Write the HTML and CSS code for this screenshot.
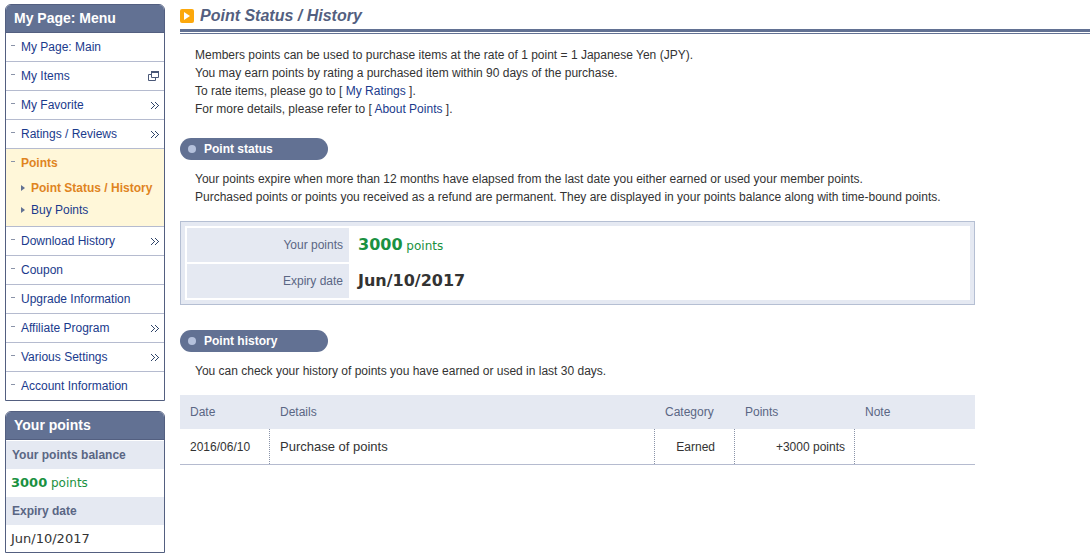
FILE: index.html
```html
<!DOCTYPE html>
<html lang="en">
<head>
    <meta charset="UTF-8">
    <meta name="viewport" content="width=device-width, initial-scale=1.0">
    <title>Point Status / History</title>
    <link rel="stylesheet" href="styles.css">
</head>
<body>

<svg class="sprite" aria-hidden="true">
    <symbol id="more" viewBox="0 0 9 9"><path d="M1 1h1v1h1v1h1v1h1v1h-1v1h-1v1h-1v1h-1v-1h1v-1h1v-1h1v-1h-1v-1h-1v-1h-1zM5 1h1v1h1v1h1v1h1v1h-1v1h-1v1h-1v1h-1v-1h1v-1h1v-1h1v-1h-1v-1h-1v-1h-1z"/></symbol>
    <symbol id="popup" viewBox="0 0 11 10"><path d="M.5 3.500h7v6h-7z" fill="none" stroke="#4a5878"/><path d="M3.500 .5h7v6h-7z" fill="#fff" stroke="#4a5878"/><path d="M3 0h8v2H3z" fill="#4a5878"/></symbol>
    <symbol id="arrow" viewBox="0 0 4 6"><path d="M0 0l4 3-4 3z"/></symbol>
</svg>

<div class="page">
    <aside class="sidebar">
        <nav class="box">
            <h2>My Page: Menu</h2>
            <ul class="menu">
                <li><a href="#">My Page: Main</a></li>
                <li><a href="#">My Items<svg class="popup"><use href="#popup"/></svg></a></li>
                <li><a href="#">My Favorite<svg class="more"><use href="#more"/></svg></a></li>
                <li><a href="#">Ratings / Reviews<svg class="more"><use href="#more"/></svg></a></li>
                <li class="active">
                    <a href="#">Points</a>
                    <ul class="submenu">
                        <li class="current"><a href="#"><svg class="arrow"><use href="#arrow"/></svg>Point Status / History</a></li>
                        <li><a href="#"><svg class="arrow"><use href="#arrow"/></svg>Buy Points</a></li>
                    </ul>
                </li>
                <li><a href="#">Download History<svg class="more"><use href="#more"/></svg></a></li>
                <li><a href="#">Coupon</a></li>
                <li><a href="#">Upgrade Information</a></li>
                <li><a href="#">Affiliate Program<svg class="more"><use href="#more"/></svg></a></li>
                <li><a href="#">Various Settings<svg class="more"><use href="#more"/></svg></a></li>
                <li><a href="#">Account Information</a></li>
            </ul>
        </nav>

        <section class="box">
            <h2>Your points</h2>
            <dl class="balance">
                <dt>Your points balance</dt>
                <dd class="green"><strong>3000</strong> points</dd>
                <dt>Expiry date</dt>
                <dd class="expiry">Jun/10/2017</dd>
            </dl>
        </section>
    </aside>

    <main>
        <h1><svg class="mark" viewBox="0 0 14 14"><rect width="14" height="14" rx="2" fill="#fca80c"/><path d="M4 3l6 4-6 4z" fill="#fff"/></svg>Point Status / History</h1>
        <div class="content">
            <p>Members points can be used to purchase items at the rate of 1 point = 1 Japanese Yen (JPY).<br>
            You may earn points by rating a purchased item within 90 days of the purchase.<br>
            To rate items, please go to [ <a href="#">My Ratings</a> ].<br>
            For more details, please refer to [ <a href="#">About Points</a> ].</p>

            <h3>Point status</h3>
            <p>Your points expire when more than 12 months have elapsed from the last date you either earned or used your member points.<br>
            Purchased points or points you received as a refund are permanent. They are displayed in your points balance along with time-bound points.</p>
            <div class="status">
                <table>
                    <tr><th scope="row">Your points</th><td class="green"><strong>3000</strong> points</td></tr>
                    <tr><th scope="row">Expiry date</th><td><strong>Jun/10/2017</strong></td></tr>
                </table>
            </div>

            <h3>Point history</h3>
            <p>You can check your history of points you have earned or used in last 30 days.</p>
            <table class="history">
                <thead>
                    <tr>
                        <th class="date">Date</th>
                        <th>Details</th>
                        <th class="category">Category</th>
                        <th class="points">Points</th>
                        <th class="note">Note</th>
                    </tr>
                </thead>
                <tbody>
                    <tr>
                        <td>2016/06/10</td>
                        <td class="details">Purchase of points</td>
                        <td class="category">Earned</td>
                        <td class="points">+3000 points</td>
                        <td></td>
                    </tr>
                </tbody>
            </table>
        </div>
    </main>
</div>

</body>
</html>
```
FILE: styles.css
```css
* {box-sizing: border-box; margin: 0; padding: 0;}
body {font-family: "Liberation Sans", Arial, sans-serif; font-size: 12px; line-height: 18px; color: #333; background-color: #fff;}
a {color: #1a3a8c; text-decoration: none;}
a:hover {text-decoration: underline;}
ul {list-style: none;}
table {border-spacing: 0; width: 100%;}
.sprite {display: none;}
.green {color: #1a9141;}

.page {display: flex; gap: 15px; padding: 4px 0 4px 5px;}
.sidebar {flex: 0 0 160px; display: flex; flex-direction: column; gap: 10px;}
main {flex: 1; min-width: 0;}

/* sidebar */
.box {border: 1px solid #535f80; border-radius: 6px 6px 0 0; overflow: hidden;}
.box h2 {background-color: #627193; border-bottom: 1px solid #535f80; color: #fff; font-size: 14px; line-height: 27px; padding-left: 8px;}
.menu > li {border-bottom: 1px solid #b5bbcf;}
.menu > li:last-child {border-bottom: none;}
.menu > li > a {display: flex; align-items: center; height: 28px; padding-right: 5px;}
.menu > li > a::before {content: ""; width: 4px; height: 1px; margin: 0 6px 4px 5px; background-color: #8a93a8;}
.menu svg {flex: none;}
.menu .more, .menu .popup {margin-left: auto;}
.more {width: 9px; height: 9px; fill: #2f4468;}
.popup {width: 11px; height: 10px;}
.menu .active {background-color: #fff7d9; padding-bottom: 5px;}
.menu .active > a, .current a {color: #e0841f; font-weight: bold;}
.submenu a {display: flex; align-items: center; height: 22px; padding-left: 15px; white-space: nowrap;}
.arrow {width: 4px; height: 6px; margin-right: 6px; fill: #627193;}
.balance {padding-top: 1px;}
.balance dt {background-color: #e5e9f2; color: #5a6684; font-weight: bold; line-height: 28px; padding-left: 6px;}
.balance dd {font-family: Verdana, "DejaVu Sans", sans-serif; line-height: 28px; padding-left: 5px;}
.balance strong {font-size: 13px;}
.balance .expiry {font-size: 13px; line-height: 27px;}

/* main column */
h1 {display: flex; align-items: center; gap: 6px; height: 30px; padding-bottom: 5px; border-bottom: 1px solid #627193; color: #535f80; font-size: 16px; font-style: italic; position: relative;}
h1::after {content: ""; position: absolute; left: 0; right: 0; bottom: 1px; height: 3px; background-color: #627193;}
.mark {width: 14px; height: 14px;}
.content {max-width: 795px; padding-top: 12px;}
.content p {padding-left: 15px;}
h3 {display: flex; align-items: center; gap: 8px; width: 148px; height: 22px; margin: 20px 0 10px; padding-left: 8px; border-radius: 11px; background-color: #627193; color: #fff; font-size: 12px;}
h3::before {content: ""; width: 8px; height: 8px; border-radius: 50%; background-color: #b5c1dc;}
.status {margin: 15px 0 25px; padding: 4px; border: 1px solid #b5bfd3; background-color: #e5e9f2;}
.status table {border-spacing: 2px; background-color: #fff;}
.status th {width: 162px; height: 34px; padding-right: 6px; background-color: #e5e9f2; color: #5a6684; font-weight: normal; text-align: right;}
.status td {padding-left: 7px; font-family: Verdana, "DejaVu Sans", sans-serif;}
.status strong {font-size: 16px;}

.history {margin-top: 15px; table-layout: fixed; border-bottom: 1px solid #b5bbcf;}
.history th {height: 34px; padding: 0 10px; background-color: #e5e9f2; color: #5a6684; font-weight: normal; text-align: left;}
.history td {height: 35px; padding: 0 9px 0 10px; border-right: 1px dotted #8a93a8;}
.history td:last-child {border-right: none;}
.history .details {font-size: 13px;}
.history td.category {padding-right: 19px; text-align: right;}
.history td.points {text-align: right;}
.date {width: 90px;}
.category {width: 80px;}
.points, .note {width: 120px;}
```
